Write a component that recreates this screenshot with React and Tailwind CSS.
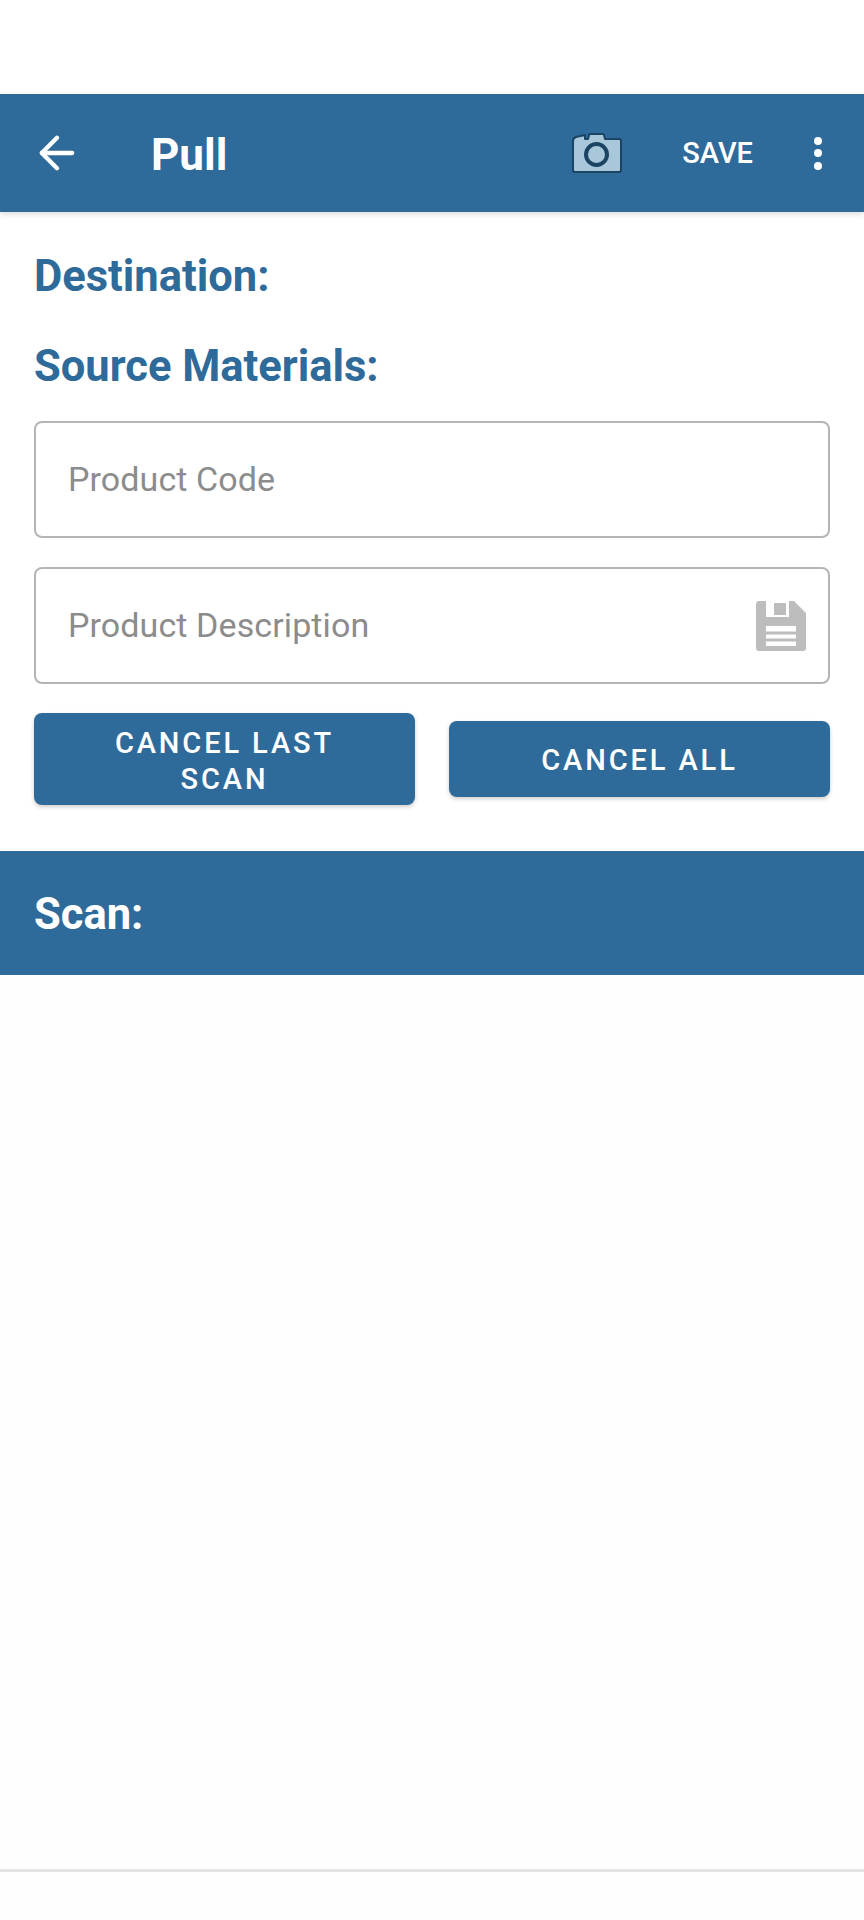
import { ArrowLeft } from 'lucide-react'

function CameraIcon() {
  return (
    <svg width="52" height="42" viewBox="0 0 52 42" className="block">
      <path
        d="M2 12 L2 38 Q2 40 4 40 L48 40 Q50 40 50 38 L50 9 Q50 7 48 7 L34 7 L33 3 Q33 2 32 2 L19 2 Q18 2 18 3 L17 7 L14 7 L14 3 L5 5 Q2 6 2 9 Z"
        fill="#a9c7db"
        stroke="#1b4463"
        strokeWidth="2"
        strokeLinejoin="round"
      />
      <circle cx="25.5" cy="22.5" r="10.5" fill="none" stroke="#1b4463" strokeWidth="4" />
    </svg>
  )
}

function FloppyIcon() {
  return (
    <svg width="50" height="50" viewBox="0 0 50 50" className="block">
      <path
        fillRule="evenodd"
        fill="#bdbdbd"
        d="M3 0 H10 V16 H33 V0 H38 L50 12 V47 Q50 50 47 50 H3 Q0 50 0 47 V3 Q0 0 3 0 Z M10 25 V45 H40 V25 Z"
      />
      <rect x="18" y="2" width="12" height="12" fill="#bdbdbd" />
      <rect x="10" y="30.5" width="30" height="3" fill="#bdbdbd" />
      <rect x="10" y="37.5" width="30" height="3" fill="#bdbdbd" />
    </svg>
  )
}

function Field({ label, icon }) {
  return (
    <div className="h-[117px] rounded-[8px] border-2 border-[#b5b5b5] bg-white pl-[32px] pr-[22px] flex items-center justify-between">
      <span className="text-[34px] text-[#8c8c8c] tracking-[0.1px]">{label}</span>
      {icon}
    </div>
  )
}

export default function App() {
  return (
    <div className="h-[1920px] bg-[#fefefe] flex flex-col font-['Roboto',sans-serif]">
      <div className="h-[94px] bg-white shrink-0" />

      {/* Toolbar */}
      <header className="h-[118px] shrink-0 bg-[#2f6b9a] shadow-[0_2px_6px_rgba(0,0,0,0.15)] flex items-center text-white relative">
        <ArrowLeft size={52} strokeWidth={2} className="ml-[31px]" />
        <h1 className="ml-[68px] pt-[3px] text-[44px] font-bold">Pull</h1>
        <div className="ml-auto flex items-center">
          <CameraIcon />
          <span className="ml-[59px] pt-[1px] text-[29px] font-medium">SAVE</span>
          <div className="ml-[61px] mr-[42px] flex flex-col gap-[4.5px]">
            <span className="w-[8px] h-[8px] rounded-full bg-white" />
            <span className="w-[8px] h-[8px] rounded-full bg-white" />
            <span className="w-[8px] h-[8px] rounded-full bg-white" />
          </div>
        </div>
      </header>

      <section className="bg-white px-[34px] pt-[41px] pb-[46px]">
        <h2 className="text-[43.5px] leading-[48px] font-bold text-[#2f6b9a]">Destination:</h2>
        <h2 className="mt-[42px] text-[43.5px] leading-[48px] font-bold text-[#2f6b9a]">Source Materials:</h2>

        <div className="mt-[30px] flex flex-col gap-[29px]">
          <Field label="Product Code" />
          <Field label="Product Description" icon={<FloppyIcon />} />
        </div>

        <div className="mt-[29px] flex items-center gap-[34px]">
          <button className="flex-1 h-[92px] rounded-[8px] bg-[#2f6b9a] text-white text-[29px] leading-[36px] font-medium tracking-[2.9px] px-[40px] pt-[3px] shadow-[0_2px_4px_rgba(0,0,0,0.2)]">
            CANCEL LAST SCAN
          </button>
          <button className="flex-1 h-[76px] rounded-[8px] bg-[#2f6b9a] text-white text-[29px] leading-[36px] font-medium tracking-[2.9px] px-[40px] pt-[2px] shadow-[0_2px_4px_rgba(0,0,0,0.2)]">
            CANCEL ALL
          </button>
        </div>
      </section>

      <div className="h-[124px] shrink-0 bg-[#2f6b9a] flex items-center px-[34px] pt-[3px]">
        <h2 className="text-[43.5px] font-bold text-white">Scan:</h2>
      </div>

      <div className="flex-1" />
      <div className="h-[3px] shrink-0 bg-[#e4e4e4] mb-[48px]" />
    </div>
  )
}
